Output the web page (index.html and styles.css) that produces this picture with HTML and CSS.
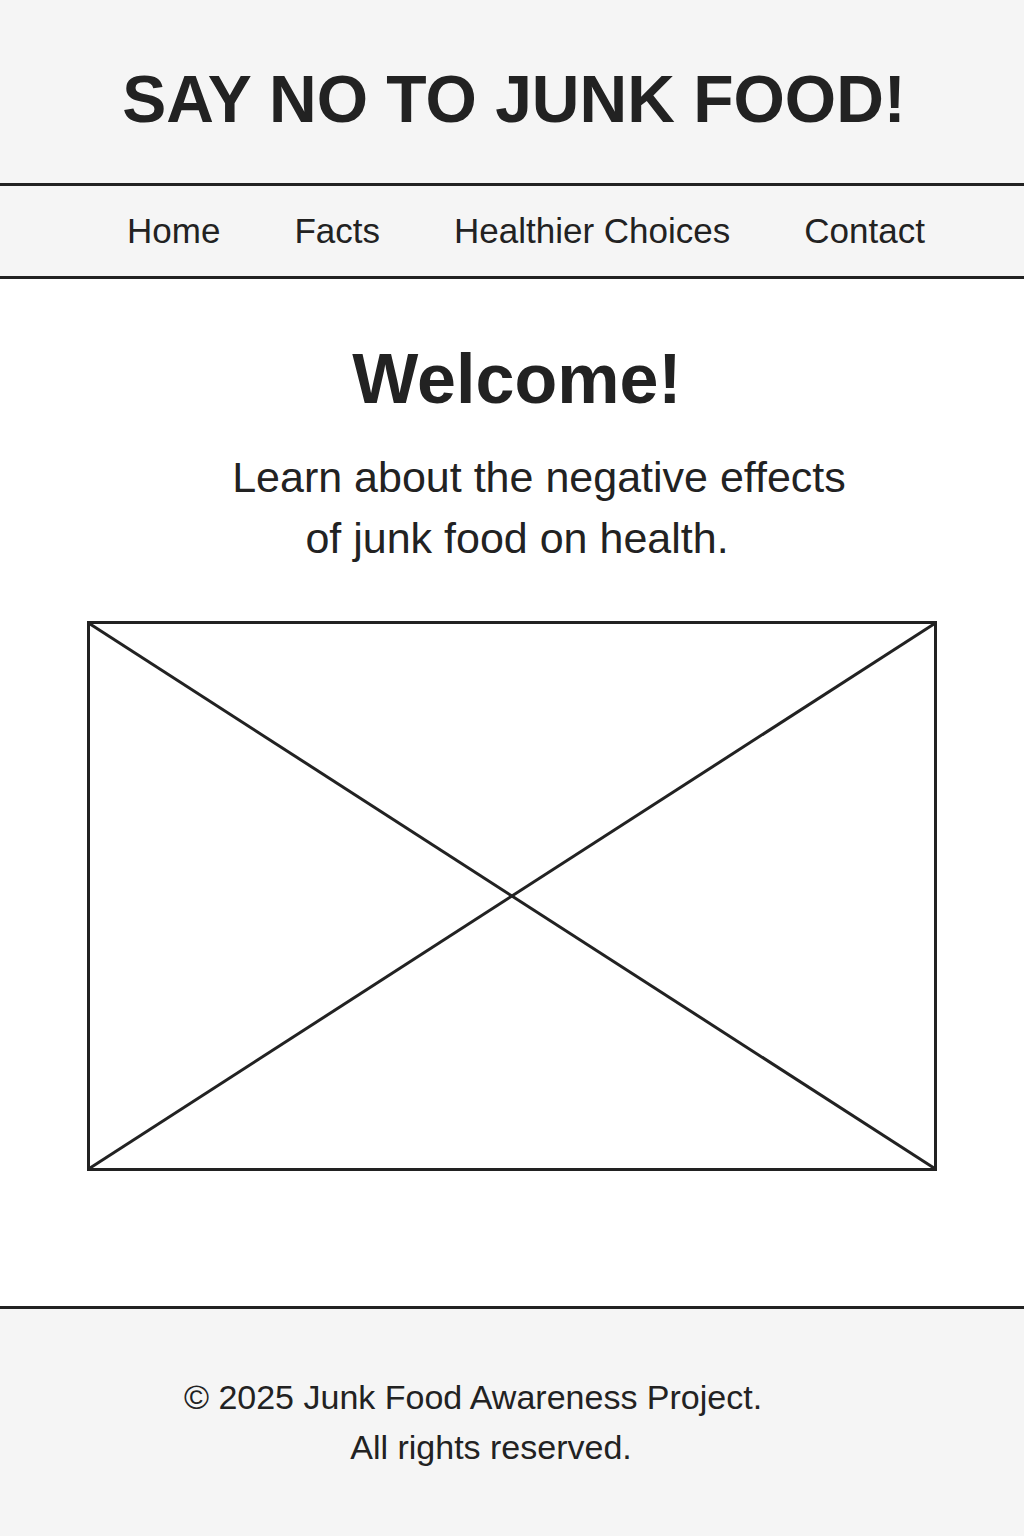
FILE: index.html
```html
<!DOCTYPE html>
<html lang="en">
<head>
    <meta charset="UTF-8">
    <meta name="viewport" content="width=device-width, initial-scale=1.0">
    <title>Say No to Junk Food</title>
    <link rel="stylesheet" href="styles.css">
</head>
<body>
    <header class="site-header">
        <h1 class="site-title">SAY NO TO JUNK FOOD!</h1>
    </header>
    <nav class="site-nav">
        <a href="#">Home</a>
        <a href="#">Facts</a>
        <a href="#">Healthier Choices</a>
        <a href="#">Contact</a>
    </nav>
    <main class="content">
        <h2 class="welcome">Welcome!</h2>
        <p class="intro">Learn about the negative effects<br>of junk food on health.</p>
        <div class="placeholder">
            <svg viewBox="0 0 100 100" preserveAspectRatio="none">
                <line x1="0" y1="0" x2="100" y2="100"></line>
                <line x1="100" y1="0" x2="0" y2="100"></line>
            </svg>
        </div>
    </main>
    <footer class="site-footer">
        <p>&copy; 2025 Junk Food Awareness Project.<br>All rights reserved.</p>
    </footer>
</body>
</html>
```

FILE: styles.css
```css
html {
    background-color: #f5f5f5;
}
body {
    margin: 0;
    font-family: 'Liberation Sans', Arial, sans-serif;
    color: #222;
}
.site-header {
    background-color: #f5f5f5;
    padding: 60px 0 45px 4px;
    border-bottom: 3px solid #222;
}
.site-title {
    margin: 0;
    font-size: 66px;
    line-height: 78px;
    font-weight: bold;
    text-align: center;
}
.site-nav {
    display: flex;
    justify-content: center;
    gap: 74px;
    padding: 24px 0 24px 28px;
    background-color: #f5f5f5;
    border-bottom: 3px solid #222;
}
.site-nav a {
    color: #222;
    text-decoration: none;
    font-size: 35px;
    line-height: 42px;
}
.content {
    background-color: #fff;
    padding: 58px 0 135px;
}
.welcome {
    margin: 0;
    padding-left: 10px;
    font-size: 70px;
    line-height: 84px;
    font-weight: bold;
    text-align: center;
}
.intro {
    margin: 26px 0 52px;
    padding-left: 10px;
    text-indent: 44px;
    font-size: 43px;
    line-height: 61px;
    text-align: center;
}
.placeholder {
    width: 844px;
    height: 544px;
    margin: 0 auto;
    border: 3px solid #222;
}
.placeholder svg {
    display: block;
    width: 100%;
    height: 100%;
}
.placeholder line {
    stroke: #222;
    stroke-width: 3;
    vector-effect: non-scaling-stroke;
}
.site-footer {
    background-color: #f5f5f5;
    border-top: 3px solid #222;
    padding: 63px 42px 64px 0;
}
.site-footer p {
    margin: 0;
    text-indent: -36px;
    font-size: 34px;
    line-height: 50px;
    text-align: center;
}
```
